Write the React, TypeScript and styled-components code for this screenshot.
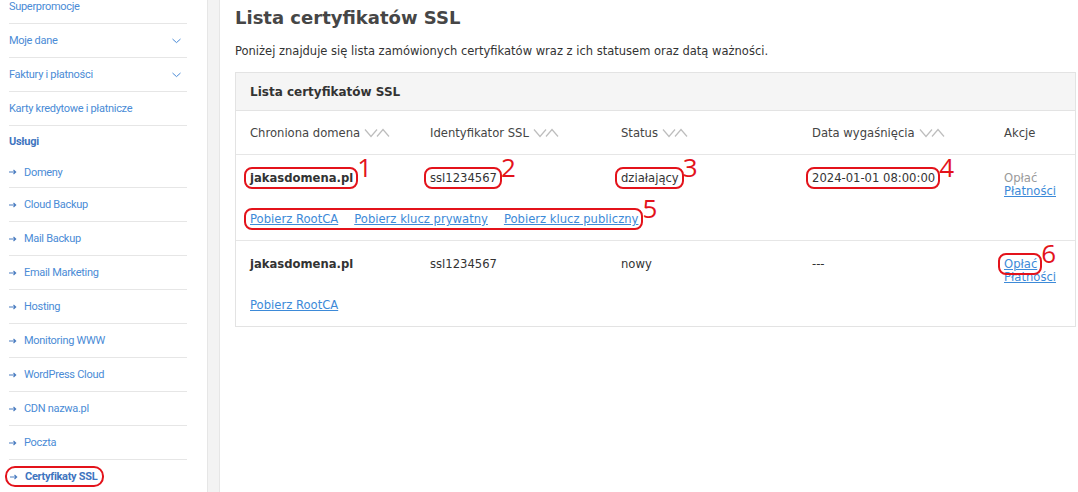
import React from "react";
import styled, { createGlobalStyle } from "styled-components";

const GlobalStyle = createGlobalStyle`
  html, body {
    margin: 0;
    padding: 0;
    background: #fff;
    overflow: hidden;
  }
  body {
    font-family: "DejaVu Sans", Verdana, sans-serif;
    color: #333;
  }
`;

const Page = styled.div`
  display: flex;
  width: 1078px;
  height: 492px;
  overflow: hidden;
`;

const Sidebar = styled.aside`
  width: 178px;
  flex-shrink: 0;
  padding: 0 20px 0 9px;
`;

const NavList = styled.ul`
  list-style: none;
  margin: -10px 0 0;
  padding: 0;
`;

const NavItem = styled.li<{ $noDivider?: boolean; $height?: number }>`
  height: ${p => p.$height ?? 33}px;
  display: flex;
  align-items: center;
  justify-content: space-between;
  border-bottom: ${p => (p.$noDivider ? "none" : "1px solid #e6e6e6")};
`;

const NavLabel = styled.span<{ $bold?: boolean }>`
  font-family: "Roboto", "Open Sans", sans-serif;
  font-size: 11px;
  letter-spacing: -0.3px;
  color: ${p => (p.$bold ? "#3f75c0" : "#4a8bd6")};
  font-weight: ${p => (p.$bold ? 700 : 400)};
  display: inline-flex;
  align-items: center;
  gap: 7px;
`;

const ActiveBox = styled.span`
  display: inline-flex;
  align-items: center;
  gap: 7px;
  margin-left: -4px;
  padding: 2px 5px 2px 3px;
  border: 2px solid #e3131b;
  border-radius: 10px;
  font-weight: 700;
  color: #3f75c0;
`;

const Gutter = styled.div`
  width: 11px;
  flex-shrink: 0;
  background: #f3f3f3;
  border-left: 1px solid #e6e6e6;
  border-right: 1px solid #e6e6e6;
`;

const Main = styled.main`
  flex: 1;
  padding: 6px 2px 0 15px;
`;

const Title = styled.h1`
  margin: 0;
  font-size: 18px;
  font-weight: 700;
  color: #464646;
  line-height: 24px;
`;

const Lead = styled.p`
  margin: 13px 0 0;
  font-size: 11.5px;
  line-height: 16px;
  color: #333;
`;

const Panel = styled.section`
  margin-top: 13px;
  border: 1px solid #e3e3e3;
`;

const PanelHead = styled.div`
  height: 37px;
  display: flex;
  align-items: center;
  padding-left: 14px;
  background: #f5f5f5;
  border-bottom: 1px solid #e3e3e3;
  font-size: 12px;
  font-weight: 700;
  color: #333;
`;

const Grid = styled.div`
  display: grid;
  grid-template-columns: 194px 191px 191px 192px 1fr;
`;

const HeadCell = styled.div<{ $first?: boolean }>`
  height: 43px;
  display: flex;
  align-items: center;
  gap: 4px;
  padding-left: ${p => (p.$first ? 14 : 0)}px;
  font-size: 11.6px;
  color: #444;
  border-bottom: 1px solid #e6e6e6;
`;

const Row = styled.div<{ $last?: boolean }>`
  padding: 14px 0 14px 14px;
  border-bottom: ${p => (p.$last ? "none" : "1px solid #e6e6e6")};
`;

const RowGrid = styled.div`
  display: grid;
  grid-template-columns: 180px 191px 191px 192px 1fr;
  font-size: 11.6px;
  line-height: 13px;
`;

const Cell = styled.div<{ $bold?: boolean }>`
  font-weight: ${p => (p.$bold ? 700 : 400)};
  color: #333;
  padding-top: 3px;
`;

const Actions = styled.div`
  display: flex;
  flex-direction: column;
  align-items: flex-start;
  padding-top: 3px;
`;

const Muted = styled.span`
  color: #9a9a9a;
`;

const Link = styled.a`
  color: #3d8ad8;
  text-decoration: underline;
  cursor: pointer;
`;

const Downloads = styled.div`
  margin-top: 14px;
  font-size: 11.6px;
  line-height: 14px;
  & ${Link} + ${Link} {
    margin-left: 16px;
  }
`;

const Mark = styled.span`
  position: relative;
  margin-left: -6px;
  padding: 2px 3px 2px 4px;
  border: 2px solid #e3131b;
  border-radius: 8px;
`;

const Num = styled.span`
  position: absolute;
  left: 100%;
  top: -15px;
  margin-left: 1px;
  font-family: "Open Sans", "Liberation Sans", sans-serif;
  font-size: 26px;
  line-height: 26px;
  font-weight: 500;
  color: #e3131b;
  text-decoration: none;
`;

const Arrow = () => (
  <svg width="8" height="6" viewBox="0 0 8 6">
    <path d="M0 3h6.5M4.5 1l2.2 2-2.2 2" fill="none" stroke="#4a7cc0" strokeWidth="1.1" />
  </svg>
);

const Chevron = () => (
  <svg width="9" height="6" viewBox="0 0 9 6" style={{ marginRight: 6 }}>
    <path d="M0.5 1l4 3.6 4-3.6" fill="none" stroke="#4a8bd6" strokeWidth="1" />
  </svg>
);

const SortIcon = () => (
  <svg width="26" height="10" viewBox="0 0 26 10">
    <path d="M1 1.5l6 7 6-7M13 8.5l6-7 6 7" fill="none" stroke="#bdbdbd" strokeWidth="1.2" />
  </svg>
);

const Marked: React.FC<{ n: number; children: React.ReactNode }> = ({ n, children }) => (
  <Mark>
    {children}
    <Num>{n}</Num>
  </Mark>
);

const services = [
  "Domeny",
  "Cloud Backup",
  "Mail Backup",
  "Email Marketing",
  "Hosting",
  "Monitoring WWW",
  "WordPress Cloud",
  "CDN nazwa.pl",
  "Poczta",
];

const App: React.FC = () => (
  <>
    <GlobalStyle />
    <Page>
      <Sidebar>
        <NavList>
          <NavItem><NavLabel>Superpromocje</NavLabel></NavItem>
          <NavItem><NavLabel>Moje dane</NavLabel><Chevron /></NavItem>
          <NavItem><NavLabel>Faktury i płatności</NavLabel><Chevron /></NavItem>
          <NavItem><NavLabel>Karty kredytowe i płatnicze</NavLabel></NavItem>
          <NavItem $noDivider $height={31}><NavLabel $bold>Usługi</NavLabel></NavItem>
          {services.map(s => (
            <NavItem key={s} $height={s === "Domeny" ? 30 : 33}>
              <NavLabel><Arrow />{s}</NavLabel>
            </NavItem>
          ))}
          <NavItem $noDivider>
            <NavLabel>
              <ActiveBox><Arrow />Certyfikaty SSL</ActiveBox>
            </NavLabel>
          </NavItem>
        </NavList>
      </Sidebar>
      <Gutter />
      <Main>
        <Title>Lista certyfikatów SSL</Title>
        <Lead>Poniżej znajduje się lista zamówionych certyfikatów wraz z ich statusem oraz datą ważności.</Lead>
        <Panel>
          <PanelHead>Lista certyfikatów SSL</PanelHead>
          <Grid>
            <HeadCell $first>Chroniona domena <SortIcon /></HeadCell>
            <HeadCell>Identyfikator SSL <SortIcon /></HeadCell>
            <HeadCell>Status <SortIcon /></HeadCell>
            <HeadCell>Data wygaśnięcia <SortIcon /></HeadCell>
            <HeadCell>Akcje</HeadCell>
          </Grid>
          <Row>
            <RowGrid>
              <Cell $bold><Marked n={1}>jakasdomena.pl</Marked></Cell>
              <Cell><Marked n={2}>ssl1234567</Marked></Cell>
              <Cell><Marked n={3}>działający</Marked></Cell>
              <Cell><Marked n={4}>2024-01-01 08:00:00</Marked></Cell>
              <Actions>
                <Muted>Opłać</Muted>
                <Link>Płatności</Link>
              </Actions>
            </RowGrid>
            <Downloads>
              <Marked n={5}>
                <Link>Pobierz RootCA</Link>
                <Link>Pobierz klucz prywatny</Link>
                <Link>Pobierz klucz publiczny</Link>
              </Marked>
            </Downloads>
          </Row>
          <Row $last>
            <RowGrid>
              <Cell $bold>jakasdomena.pl</Cell>
              <Cell>ssl1234567</Cell>
              <Cell>nowy</Cell>
              <Cell>---</Cell>
              <Actions>
                <span><Marked n={6}><Link>Opłać</Link></Marked></span>
                <Link>Płatności</Link>
              </Actions>
            </RowGrid>
            <Downloads>
              <Link>Pobierz RootCA</Link>
            </Downloads>
          </Row>
        </Panel>
      </Main>
    </Page>
  </>
);

export default App;
